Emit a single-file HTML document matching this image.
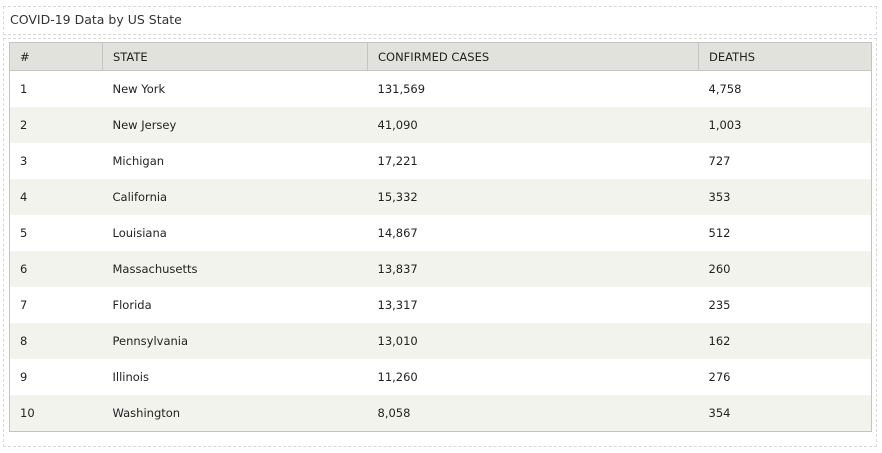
<!DOCTYPE html>
<html><head><style>
body{margin:0;background:#fff;font-family:"DejaVu Sans","Liberation Sans",sans-serif;font-size:11.5px;color:#222;}
.b1{position:absolute;left:3px;top:6px;width:872px;height:27px;border:1px dashed #d8d8d8;}
.b1 span{position:absolute;left:6px;top:5px;font-size:12.5px;color:#333;}
.b2{position:absolute;left:3px;top:38px;width:872px;height:407px;border:1px dashed #d8d8d8;}
table{position:absolute;left:9px;top:42px;width:863px;border-collapse:collapse;border:1px solid #c4c4c4;}
th{background:#e2e2dd;font-weight:normal;text-align:left;height:27px;padding:0 0 0 10px;border-left:1px solid #c4c4c4;border-bottom:1px solid #c4c4c4;}
th:first-child{border-left:none}
td{height:36px;padding:0 0 0 10px;}
tr:nth-child(odd) td{background:#f3f3ee;}
</style></head><body>
<div class="b1"><span>COVID-19 Data by US State</span></div>
<div class="b2"></div>
<table>
<tr><th style="width:82px">#</th><th style="width:254px">STATE</th><th style="width:320px">CONFIRMED CASES</th><th>DEATHS</th></tr>
<tr><td>1</td><td>New York</td><td>131,569</td><td>4,758</td></tr>
<tr><td>2</td><td>New Jersey</td><td>41,090</td><td>1,003</td></tr>
<tr><td>3</td><td>Michigan</td><td>17,221</td><td>727</td></tr>
<tr><td>4</td><td>California</td><td>15,332</td><td>353</td></tr>
<tr><td>5</td><td>Louisiana</td><td>14,867</td><td>512</td></tr>
<tr><td>6</td><td>Massachusetts</td><td>13,837</td><td>260</td></tr>
<tr><td>7</td><td>Florida</td><td>13,317</td><td>235</td></tr>
<tr><td>8</td><td>Pennsylvania</td><td>13,010</td><td>162</td></tr>
<tr><td>9</td><td>Illinois</td><td>11,260</td><td>276</td></tr>
<tr><td>10</td><td>Washington</td><td>8,058</td><td>354</td></tr>
</table>
</body></html>
